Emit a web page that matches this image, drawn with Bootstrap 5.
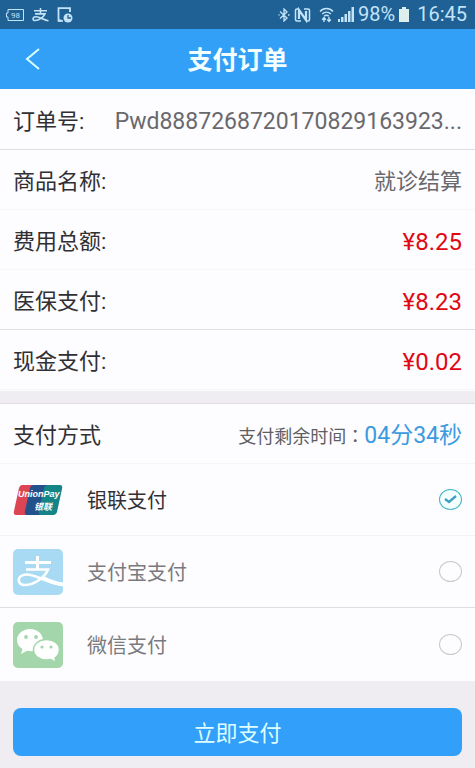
<!DOCTYPE html>
<html lang="zh-CN">
<head>
<meta charset="utf-8">
<meta name="viewport" content="width=device-width, initial-scale=1">
<title>支付订单</title>
<link href="https://cdn.jsdelivr.net/npm/bootstrap@5.3.0/dist/css/bootstrap.min.css" rel="stylesheet">
<style>
  body { font-family: Roboto, "Noto Sans CJK SC", sans-serif; font-size: 22px; line-height: 30px; background: #efedf1; color: #303034; }
  .status-bar { height: 29px; background: #1f6095; color: #c3e4f8; font-size: 20px; line-height: 29px; padding: 0 8px 0 6px; }
  .title-bar { height: 60px; background: #33a0f7; }
  .title-bar h1 { font-size: 25px; line-height: 36px; color: #f4ffff; padding-top: 4px; }
  .back-link { width: 40px; color: #d8ffff; }
  .pay-row { min-height: 60px; padding: 4px 13px 0; border-bottom: 1px solid #f6f5f8; }
  .pay-row.ruled, .pay-option.ruled { border-bottom-color: #dfdde2; }
  .pay-row h2 { font-size: 22px; line-height: 30px; }
  .order-info { background: #fdfcfe; padding: 1px 0; }
  .order-value { color: #69696d; }
  .order-number { font-size: 23px; }
  .amount { color: #e00812; font-size: 24px; }
  .pay-methods { background: #fdfcfe; margin-top: 12px; border-top: 1px solid #dfdde2; }
  .time-label { font-size: 18px; color: #5f5f63; }
  .mid-colon { font-family: "Noto Sans CJK TC", sans-serif; }
  .time-left { font-size: 23px; color: #3c9ade; }
  .pay-option { min-height: 72px; padding: 0 13px; border-bottom: 1px solid #f2f1f4; font-size: 20px; cursor: pointer; }
  .pay-option:last-child { min-height: 73px; border-bottom: 0; }
  .pay-option .form-check-input { width: 23px; height: 21px; border: 1px solid #cbc8ce; border-radius: 50%; background-color: transparent; }
  .pay-option .form-check-input:checked {
    border-color: #43b5c6; background-color: #f3ffff; background-size: 23px 21px;
    background-image: url("data:image/svg+xml,%3csvg xmlns='http://www.w3.org/2000/svg' viewBox='0 0 23 21'%3e%3cpath d='M6 10l4 3 7-6' fill='none' stroke='%23429fc3' stroke-width='2.4'/%3e%3c/svg%3e");
  }
  .pay-off { color: #7a7a7e; }
  .pay-logo { width: 50px; margin-right: 24px; }
  .pay-name { padding-top: 3px; }
  .action-area { padding: 27px 13px 12px; }
  .btn-pay { --bs-btn-color: #ddffff; --bs-btn-bg: #329ffa; --bs-btn-hover-color: #fff; --bs-btn-hover-bg: #258ee6; height: 48px; border: 0; border-radius: 8px; font-size: 22px; line-height: 30px; padding: 10px 12px 6px; }
</style>
</head>
<body>
<header>
  <div class="status-bar d-flex align-items-center justify-content-between">
    <div class="d-flex align-items-center gap-2">
      <svg width="18" height="12" viewBox="0 0 18 12" fill="none" stroke="currentColor" role="img" aria-label="98"><path d="M2 .5h15.500v11H2V8H.5V4H2z"/><text x="5" y="9" font-size="8" fill="currentColor" stroke="none">98</text></svg>
      <svg width="17" height="14" viewBox="0 0 17 14" fill="none" stroke="currentColor" stroke-width="1.600" aria-hidden="true"><path d="M2 2.800h13M8.500 0v6M3 5.900h10C11.500 9 7 12.500 3 12.500c-3 0-2.500-3.700 1-3.700 4 0 7.500 3 12.500 4"/></svg>
      <svg width="16" height="16" viewBox="0 0 16 16" fill="none" stroke="currentColor" aria-hidden="true"><path d="M13 5V1.200H1.500v12.300h3" stroke-width="1.800"/><path d="M1 14h5" stroke-width="1.600"/><circle cx="11" cy="11" r="4.500" fill="currentColor" stroke="none"/><path d="M11 8v3h3" stroke="#1f6095" stroke-width="1.300"/></svg>
    </div>
    <div class="d-flex align-items-center">
      <svg class="me-1" width="12" height="14" viewBox="0 0 12 14" fill="none" stroke="currentColor" stroke-width="1.300" aria-hidden="true"><path d="M2 3.500l7 6.500-3 3V1l3 3-7 6.500M.5 7h1M10 7h1.500"/></svg>
      <svg class="me-2" width="17" height="16" viewBox="0 0 17 16" fill="none" stroke="currentColor" aria-hidden="true"><path d="M7 14H3q-1.500 0-1.500-1.500v-9Q1.500 2 3 2h2M10 2h4q1.500 0 1.500 1.500v9q0 1.500-1.500 1.500h-2" stroke-width="1.500"/><path d="M5 12V3l7 10V4" stroke-width="2.200"/></svg>
      <svg class="me-1" width="15" height="16" viewBox="0 0 15 16" fill="none" stroke="currentColor" stroke-width="1.400" aria-hidden="true"><path d="M1 4.500c3.500-4 9.500-4 13 0M3.200 7c2.400-2.500 6.200-2.500 8.600 0M5.200 9.200c1.200-1.200 3.400-1.200 4.600 0M5 10.500V15M3.200 12.700L5 10.500l1.800 2.200M10 10v4.500M8.200 12.500l1.800 2 1.800-2"/></svg>
      <svg class="me-1" width="16" height="15" viewBox="0 0 16 15" fill="currentColor" aria-hidden="true"><path d="M0 12h2v3H0zM3 10h2.500v5H3zM6.500 7H9v8H6.500zM10 4h2.500v11H10zM13.500 0H16v15h-2.500z"/></svg>
      <span class="me-1">98%</span>
      <svg class="me-2" width="10" height="15" viewBox="0 0 10 15" fill="#dcefed" aria-hidden="true"><path d="M3 0h4v2h3v13H0V2h3z"/></svg>
      <span>16:45</span>
    </div>
  </div>
  <nav class="title-bar d-flex align-items-center px-3" aria-label="页面导航">
    <a class="back-link d-flex ps-2" href="#" aria-label="返回"><svg width="18" height="24" viewBox="0 0 18 24" fill="none" stroke="currentColor" stroke-width="2"><path d="M15 2L3 12l12 10"/></svg></a>
    <h1 class="flex-grow-1 text-center fw-bold m-0">支付订单</h1>
    <span class="back-link"></span>
  </nav>
</header>
<main>
  <dl class="order-info m-0">
    <div class="pay-row ruled d-flex align-items-center justify-content-between">
      <dt class="fw-normal text-nowrap">订单号:</dt><dd class="order-value order-number m-0 text-truncate">Pwd8887268720170829163923...</dd>
    </div>
    <div class="pay-row d-flex align-items-center justify-content-between">
      <dt class="fw-normal">商品名称:</dt><dd class="order-value m-0">就诊结算</dd>
    </div>
    <div class="pay-row d-flex align-items-center justify-content-between">
      <dt class="fw-normal">费用总额:</dt><dd class="amount m-0">¥8.25</dd>
    </div>
    <div class="pay-row ruled d-flex align-items-center justify-content-between">
      <dt class="fw-normal">医保支付:</dt><dd class="amount m-0">¥8.23</dd>
    </div>
    <div class="pay-row d-flex align-items-center justify-content-between">
      <dt class="fw-normal">现金支付:</dt><dd class="amount m-0">¥0.02</dd>
    </div>
  </dl>
  <form>
    <section class="pay-methods">
      <div class="pay-row d-flex align-items-center justify-content-between">
        <h2 class="m-0 fw-normal">支付方式</h2>
        <div class="d-flex align-items-center"><span class="time-label">支付剩余时间<span class="mid-colon" lang="zh-TW">：</span></span><span class="time-left">04分34秒</span></div>
      </div>
      <label class="pay-option d-flex align-items-center" for="unionpay">
        <svg class="pay-logo" height="32" viewBox="0 0 50 32" aria-hidden="true">
          <path d="M9 1h13l-7 30H3q-3 0-2-4L6 4q1-3 3-3z" fill="#dc4654"/>
          <path d="M21 1h15l-7 30H14q-3 0-2-4l5-23q1-3 4-3z" fill="#23518b"/>
          <path d="M35 1h12q3 0 2 4l-5 23q-1 3-4 3H28q-3 0-2-4l5-23q1-3 4-3z" fill="#158487"/>
          <text x="5" y="13" font-family="Liberation Sans" font-size="9" font-weight="bold" font-style="italic" fill="#fff">UnionPay</text>
          <text x="21" y="26" font-family="Noto Sans CJK SC" font-size="9" font-weight="bold" font-style="italic" fill="#fff">银联</text>
        </svg>
        <span class="pay-name flex-grow-1">银联支付</span>
        <input class="form-check-input m-0" type="radio" name="method" id="unionpay" checked>
      </label>
      <label class="pay-option ruled pay-off d-flex align-items-center" for="alipay">
        <svg class="pay-logo" height="46" viewBox="0 0 50 46" aria-hidden="true">
          <rect width="50" height="46" rx="5" fill="#a8daf3"/>
          <g fill="none" stroke="#fff"><path d="M12 13.500h26M24.500 7v13" stroke-width="3"/><path d="M13 20.500h22C32 28 22 36 12 36c-9 0-8-10 1-10.500 9-.5 17 7 36 10" stroke-width="2.600"/><path d="M30 29c6 3 12 5.500 20 6.500" stroke-width="4"/></g>
        </svg>
        <span class="pay-name flex-grow-1">支付宝支付</span>
        <input class="form-check-input m-0" type="radio" name="method" id="alipay">
      </label>
      <label class="pay-option pay-off d-flex align-items-center" for="wechat">
        <svg class="pay-logo" height="46" viewBox="0 0 50 46" aria-hidden="true">
          <rect width="50" height="46" rx="5" fill="#a3d7ab"/>
          <path d="M17 7C9.500 7 4 12 4 18c0 4 2 7 5.500 9L8 32l6-3.200c10 2 16-3.300 16-10.300C30 12 24.500 7 17 7z" fill="#fff"/>
          <path d="M33.500 17.500c-7.500 0-13 4.500-13 10.300S26 38 33.500 38l4-.5 6 3-1.500-4.500c3-2 4.500-5 4.500-8.200 0-5.800-5.500-10.300-13-10.300z" fill="#fff" stroke="#a3d7ab" stroke-width="1.500"/>
          <g fill="#a3d7ab"><circle cx="13" cy="15" r="1.900"/><circle cx="23" cy="15" r="1.900"/><circle cx="29" cy="25" r="1.600"/><circle cx="38" cy="25" r="1.600"/></g>
        </svg>
        <span class="pay-name flex-grow-1">微信支付</span>
        <input class="form-check-input m-0" type="radio" name="method" id="wechat">
      </label>
    </section>
    <div class="action-area"><button class="btn btn-pay w-100" type="button">立即支付</button></div>
  </form>
</main>
<script src="https://cdn.jsdelivr.net/npm/bootstrap@5.3.0/dist/js/bootstrap.bundle.min.js"></script>
</body>
</html>
